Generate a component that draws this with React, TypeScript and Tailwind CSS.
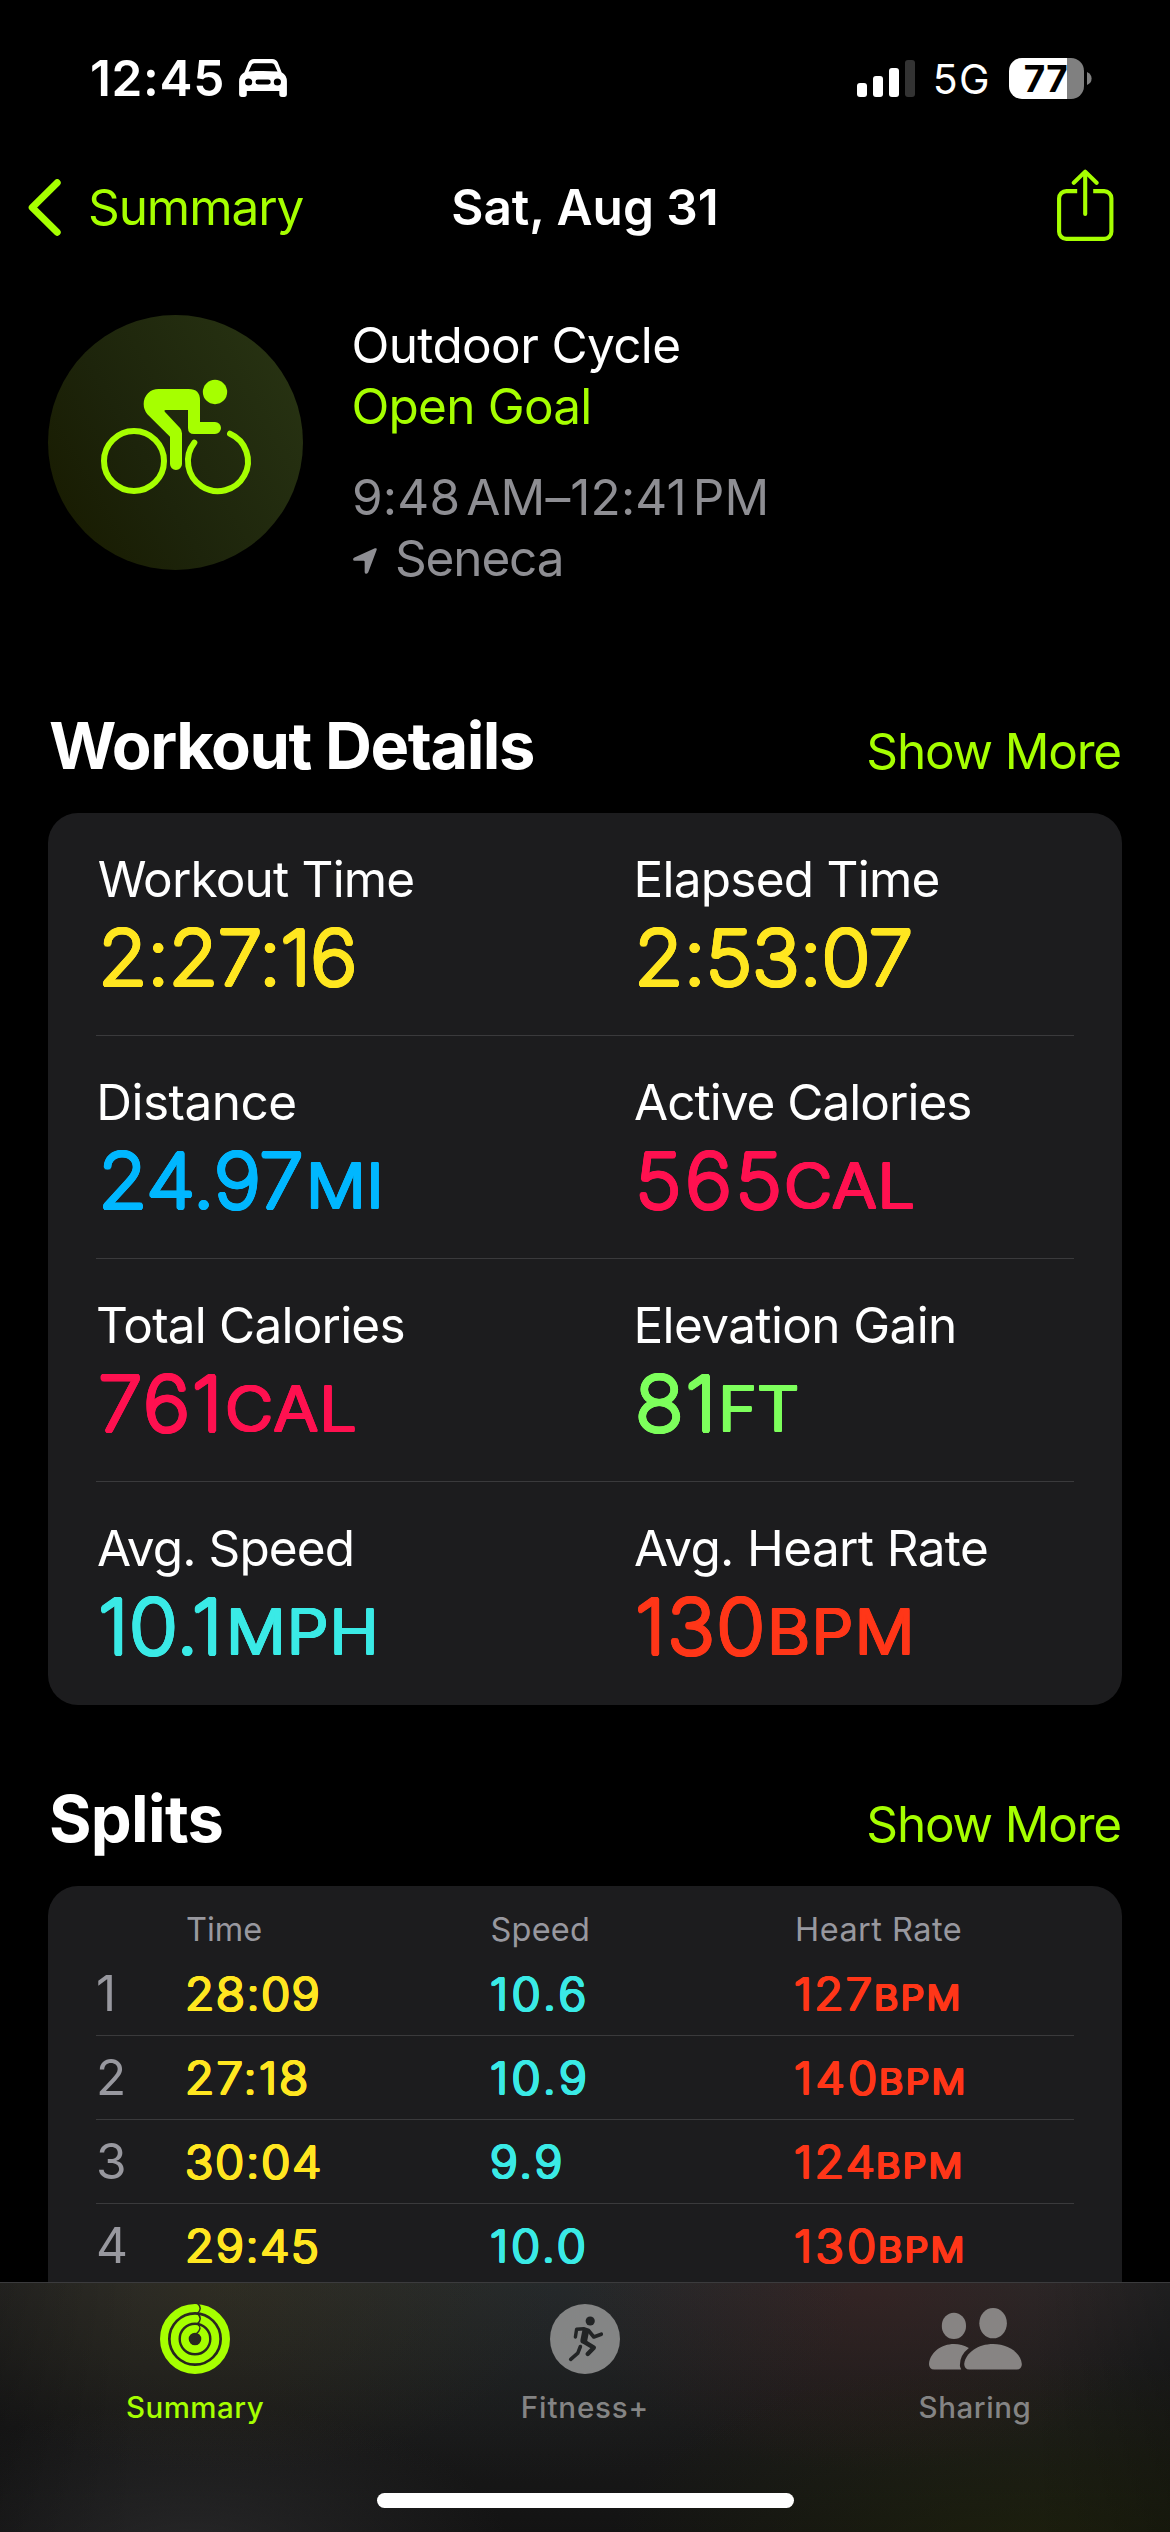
import type { ReactNode } from "react";

type Metric = {
  label: string;
  labelClass: string;
  value: string;
  valueClass: string;
  color: string;
  unit?: string;
  unitClass?: string;
};

const metrics: Metric[] = [
  { label: "Workout Time", labelClass: "tracking-[-0.83px] ml-[1.7px]", color: "text-[#ffe620]", value: "2:27:16", valueClass: "tracking-[-0.65px]" },
  { label: "Elapsed Time", labelClass: "tracking-[-0.75px] ml-[0.5px]", color: "text-[#ffe620]", value: "2:53:07", valueClass: "tracking-[-0.2px] -ml-px" },
  { label: "Distance", labelClass: "tracking-[-0.51px] ml-[0.3px]", color: "text-[#00b7ff]", value: "24.97", valueClass: "tracking-[-0.25px]", unit: "MI", unitClass: "tracking-[0.4px] ml-[15px]" },
  { label: "Active Calories", labelClass: "tracking-[-0.99px] ml-px", color: "text-[#ff1150]", value: "565", valueClass: "tracking-[3.25px]", unit: "CAL", unitClass: "tracking-[0.65px] ml-[8px]" },
  { label: "Total Calories", labelClass: "tracking-[-0.8px]", color: "text-[#ff1150]", value: "761", valueClass: "tracking-[1.65px]", unit: "CAL", unitClass: "tracking-[1.05px] ml-[8.2px]" },
  { label: "Elevation Gain", labelClass: "tracking-[-0.63px] ml-[0.5px]", color: "text-[#7dff5c]", value: "81", valueClass: "tracking-[1.9px]", unit: "FT", unitClass: "ml-[4.9px]" },
  { label: "Avg. Speed", labelClass: "tracking-[-0.92px] ml-px", color: "text-[#3aeae6]", value: "10.1", valueClass: "tracking-[0.4px]", unit: "MPH", unitClass: "tracking-[0.9px] ml-[10.2px]" },
  { label: "Avg. Heart Rate", labelClass: "tracking-[-0.63px] ml-px", color: "text-[#ff3618]", value: "130", valueClass: "tracking-[1.35px]", unit: "BPM", unitClass: "tracking-[1.3px] ml-[8.4px]" },
];

const splits = [
  { n: "1", time: "28:09", timeClass: "tracking-[1.6px]", speed: "10.6", speedClass: "tracking-[3.4px]", hr: "127", hrClass: "tracking-[2px]", unitClass: "ml-[5.1px]" },
  { n: "2", time: "27:18", timeClass: "tracking-[2.1px]", speed: "10.9", speedClass: "tracking-[3.3px]", hr: "140", hrClass: "tracking-[3.3px]", unitClass: "ml-[4.2px]" },
  { n: "3", time: "30:04", timeClass: "tracking-[1.95px]", speed: "9.9", speedClass: "tracking-[2.4px]", hr: "124", hrClass: "tracking-[2.4px]", unitClass: "ml-[4px]" },
  { n: "4", time: "29:45", timeClass: "tracking-[1.6px]", speed: "10.0", speedClass: "tracking-[2.9px]", hr: "130", hrClass: "tracking-[3.2px]", unitClass: "ml-[4.3px]" },
];

/* Light glyphs thickened evenly in every direction, which rounds their stroke ends. */
const roundedValue =
  "inline-block origin-left scale-x-[1.06] font-extralight [text-shadow:2px_0_currentColor,1.732px_1px_currentColor,1px_1.732px_currentColor,0_2px_currentColor,-1px_1.732px_currentColor,-1.732px_1px_currentColor,-2px_0_currentColor,-1.732px_-1px_currentColor,-1px_-1.732px_currentColor,0_-2px_currentColor,1px_-1.732px_currentColor,1.732px_-1px_currentColor]";
const roundedUnit =
  "inline-block origin-left scale-x-[1.08] font-light [text-shadow:1.35px_0_currentColor,1.17px_0.68px_currentColor,0.68px_1.17px_currentColor,0_1.35px_currentColor,-0.68px_1.17px_currentColor,-1.17px_0.68px_currentColor,-1.35px_0_currentColor,-1.17px_-0.68px_currentColor,-0.68px_-1.17px_currentColor,0_-1.35px_currentColor,0.68px_-1.17px_currentColor,1.17px_-0.68px_currentColor]";
const roundedCell =
  "inline-block origin-left scale-x-[1.08] font-extralight [text-shadow:1.4px_0_currentColor,1.2px_0.7px_currentColor,0.7px_1.2px_currentColor,0_1.4px_currentColor,-0.7px_1.2px_currentColor,-1.2px_0.7px_currentColor,-1.4px_0_currentColor,-1.2px_-0.7px_currentColor,-0.7px_-1.2px_currentColor,0_-1.4px_currentColor,0.7px_-1.2px_currentColor,1.2px_-0.7px_currentColor]";
const roundedCellUnit =
  "inline-block origin-left scale-x-[1.1] font-light [text-shadow:1.1px_0_currentColor,0.95px_0.55px_currentColor,0.55px_0.95px_currentColor,0_1.1px_currentColor,-0.55px_0.95px_currentColor,-0.95px_0.55px_currentColor,-1.1px_0_currentColor,-0.95px_-0.55px_currentColor,-0.55px_-0.95px_currentColor,0_-1.1px_currentColor,0.55px_-0.95px_currentColor,0.95px_-0.55px_currentColor]";

function CarIcon() {
  return (
    <svg viewBox="0 0 48 38" className="h-[38px] w-[48px] fill-white">
      <path
        fillRule="evenodd"
        d="M9.4 3.6Q11 0 15 0H33.2Q37.2 0 38.8 3.6L42.6 13.2Q47.9 16 47.9 22.500V35.500A2.400 2.400 0 0 1 45.500 37.900H43A2.700 2.700 0 0 1 40.300 35.200V32H7.800V35.200A2.700 2.700 0 0 1 5.100 37.900H2.500A2.400 2.400 0 0 1 .1 35.500V22.500Q.1 16 5.500 13.200ZM12.900 5.600L9.600 12.400Q24 11.400 38.500 12.400L35.300 5.600Q34.700 4.400 33 4.300H15.200Q13.500 4.400 12.900 5.600ZM9.600 19.400A3.600 3.600 0 1 0 9.600 26.600A3.600 3.600 0 1 0 9.600 19.400ZM38.400 19.400A3.600 3.600 0 1 0 38.400 26.600A3.600 3.600 0 1 0 38.400 19.400ZM18.900 20.600A2.450 2.450 0 0 0 18.900 25.500H29.300A2.450 2.450 0 0 0 29.300 20.600Z"
      />
    </svg>
  );
}

function SignalIcon() {
  return (
    <svg viewBox="0 0 58 37" className="h-[37px] w-[58px] fill-white">
      <rect x="0" y="23" width="10" height="14" rx="3" />
      <rect x="16" y="16" width="10" height="21" rx="3" />
      <rect x="32" y="8" width="10" height="29" rx="3" />
      <rect x="48" y="0" width="10" height="37" rx="3" fill="#333333" />
    </svg>
  );
}

function Battery() {
  return (
    <div className="flex items-center">
      <div className="flex h-[41px] w-[75px] items-center rounded-[13px] bg-[linear-gradient(to_right,#fff_58px,#808080_58px)] pl-[14.7px]">
        <span className="text-[37px] leading-[45px] font-bold tracking-[0.3px] text-black">77</span>
      </div>
      <svg viewBox="0 0 5 13" className="ml-[3px] h-[13px] w-[5px] fill-[#808080]">
        <path d="M0 0Q4.600 2 4.600 6.500T0 13Z" />
      </svg>
    </div>
  );
}

function ShareIcon() {
  return (
    <svg viewBox="0 0 57 72" className="h-[72px] w-[57px] fill-none stroke-[#a6ff00] stroke-[4.100px]">
      <path d="M20.200 22.100H9.300A7.200 7.200 0 0 0 2.100 29.300V62.700A7.200 7.200 0 0 0 9.300 69.900H47.200A7.200 7.200 0 0 0 54.400 62.700V29.300A7.200 7.200 0 0 0 47.200 22.100H36.200" />
      <path strokeLinecap="round" strokeLinejoin="round" d="M28.200 45V2.800M16.800 13.800L28.200 2.600L39.600 13.800" />
    </svg>
  );
}

function CyclistBadge() {
  return (
    <div className="size-[255px] shrink-0 rounded-full bg-[linear-gradient(60deg,#181b00_5%,#1d240b_40%,#273212_90%)]">
      <svg viewBox="144 75 765 765" className="size-full fill-[#a6ff00]">
        <g fill="none" stroke="#a6ff00" strokeWidth="18" strokeLinecap="round">
          <circle cx="402" cy="513" r="90" />
          <path d="M690 431A90 90 0 1 1 583 458" />
        </g>
        <circle cx="645" cy="306" r="36.500" />
        <path d="M476 297H566Q600 297 600 331V396H645A18 18 0 0 1 645 432H582Q564 432 564 414V360H497Q491 360 495 366L540 414Q546 421 546 430V522A18 18 0 0 1 510 522V440L442 373Q431 359 431 342Q431 322 444 309.500T476 297Z" />
      </svg>
    </div>
  );
}

function RingsIcon() {
  return (
    <svg viewBox="0 0 70 70" className="size-[70px] fill-none stroke-[#a6ff00]">
      <circle cx="35" cy="35" r="31" strokeWidth="8" />
      <circle cx="35" cy="35" r="20.400" strokeWidth="7.800" />
      <circle cx="35" cy="35" r="10.200" strokeWidth="7.800" />
      <g stroke="#292820" strokeWidth="1.500">
        <path d="M37.600-.5Q43 4.500 37.300 9.600" />
        <path d="M37.600 9.600Q43 14.500 37.300 20" />
        <path d="M37.600 20Q43 24.500 36 30" />
      </g>
    </svg>
  );
}

function RunnerIcon() {
  return (
    <svg viewBox="0 0 70 70" className="size-[70px]">
      <circle cx="35" cy="35" r="35" fill="#848585" />
      <g fill="none" stroke="#222425" strokeLinecap="round" strokeLinejoin="round">
        <path strokeWidth="3.400" d="M25.400 33L26.600 25.300L34 24.800" />
        <path strokeWidth="3.600" d="M38.500 26.500L43.800 33L51.300 30.200" />
        <path strokeWidth="6.800" d="M35.700 27L33.800 36.500" />
        <path strokeWidth="4.400" d="M34.500 38L43.800 43.700L37.700 50" />
        <path strokeWidth="3.600" d="M30.400 42.500L27.800 49.200L20.700 55.400" />
      </g>
      <circle cx="40.200" cy="17" r="4.600" fill="#222425" />
    </svg>
  );
}

function PeopleIcon() {
  return (
    <svg viewBox="684 144 280 186" className="my-1 h-[62px] w-[93px]">
      <g fill="#878483">
        <ellipse cx="759" cy="197.500" rx="36.500" ry="39.500" />
        <ellipse cx="877" cy="189.500" rx="41.500" ry="45.500" />
        <path d="M700 329Q684 328 684 312C687 277 722 252 759 252Q783 252 804 264Q776 286 777 316Q777 323 781 329Z" />
        <path d="M806 329Q790 328 790 312C794 278 832 252 877 252S960 278 963.500 312Q964 328 948 329Z" />
      </g>
    </svg>
  );
}

function SectionHeading({ title, titleClass }: { title: string; titleClass: string }) {
  return (
    <div className="flex h-[106px] items-baseline justify-between">
      <h2 className={`text-[65px] leading-[78px] font-bold ${titleClass}`}>{title}</h2>
      <button className="mr-px text-[49.5px] leading-[60px] tracking-[-1.18px] text-[#a6ff00]">Show More</button>
    </div>
  );
}

function MetricCell({ m }: { m: Metric }) {
  return (
    <div className="flex flex-col pt-9">
      <span className={`text-[49.5px] leading-[60px] text-white ${m.labelClass}`}>{m.label}</span>
      <div className={`flex items-baseline pl-[1.5px] text-[76px] leading-[96px] ${m.color}`}>
        <span className={`${roundedValue} ${m.valueClass}`}>{m.value}</span>
        {m.unit && <span className={`text-[61.5px] leading-none ${roundedUnit} ${m.unitClass}`}>{m.unit}</span>}
      </div>
    </div>
  );
}

function Tab({ icon, label, className }: { icon: ReactNode; label: string; className: string }) {
  return (
    <button className="flex flex-col items-center">
      {icon}
      <span className={`mt-[15px] text-[29.5px] leading-9 font-medium ${className}`}>{label}</span>
    </button>
  );
}

export default function App() {
  return (
    <div className="flex h-[2532px] w-[1170px] flex-col overflow-hidden bg-black font-['Inter',sans-serif] text-white">
      <header className="flex h-[108px] shrink-0 items-center justify-between pt-12 pr-[78px] pl-[90px]">
        <div className="flex items-center gap-[14px]">
          <span className="text-[49.5px] leading-[60px] font-semibold tracking-[0.67px]">12:45</span>
          <CarIcon />
        </div>
        <div className="flex items-center gap-[18px]">
          <SignalIcon />
          <span className="pt-[2px] text-[41px] leading-[58px] tracking-[1.38px]">5G</span>
          <Battery />
        </div>
      </header>

      <nav className="mt-[61px] grid h-[72px] shrink-0 grid-cols-[1fr_auto_1fr] items-center">
        <button className="flex items-center gap-[27px] pt-1 pl-7 text-[#a6ff00]">
          <svg viewBox="0 0 33 57" className="h-[57px] w-[33px] fill-none stroke-[#a6ff00] stroke-[7px]">
            <path strokeLinecap="round" strokeLinejoin="round" d="M29.200 3.700L4.200 28.500L29.200 53.300" />
          </svg>
          <span className="text-[49.5px] leading-[60px] tracking-[-1.08px]">Summary</span>
        </button>
        <h1 className="pt-1 text-[49.5px] leading-[60px] font-semibold">Sat, Aug 31</h1>
        <button className="flex justify-end pr-14">
          <ShareIcon />
        </button>
      </nav>

      <main className="flex min-h-0 flex-1 flex-col overflow-hidden px-12">
        <section className="mt-[74px] flex h-[274px] shrink-0 gap-12">
          <CyclistBadge />
          <div className="flex flex-col text-[49.5px] leading-[61px]">
            <span className="ml-[0.5px] tracking-[-0.64px]">Outdoor Cycle</span>
            <span className="ml-[0.5px] tracking-[-0.78px] text-[#a6ff00]">Open Goal</span>
            <span className="mt-[30px] ml-px tracking-[0.15px] whitespace-nowrap text-[#8e8e93] [word-spacing:-8px]">9:48 AM–12:41 PM</span>
            <span className="flex items-center gap-[18px] pl-[2px] tracking-[-1.16px] text-[#8e8e93]">
              <svg viewBox="0 0 72 79" className="mt-1 h-[26px] w-6 fill-[#8e8e93]">
                <path d="M66 1Q74-1 71 7L46 74Q43 80 38 78Q35 77 35 73V42Q35 39 32 39H4Q0 39 0 35Q-1 32 4 29Z" />
              </svg>
              Seneca
            </span>
          </div>
        </section>

        <section className="mt-[118px] shrink-0">
          <SectionHeading title="Workout Details" titleClass="tracking-[-1.43px] ml-[1px]" />
          <div className="rounded-[30px] bg-[#1c1c1e] px-12">
            {[0, 2, 4, 6].map((i) => (
              <div key={i} className="grid h-[223px] grid-cols-[537px_1fr] border-b border-[#3a3a3c] last:border-b-0">
                <MetricCell m={metrics[i]} />
                <MetricCell m={metrics[i + 1]} />
              </div>
            ))}
          </div>
        </section>

        <section className="mt-[75px] shrink-0">
          <SectionHeading title="Splits" titleClass="tracking-[-0.72px] ml-px" />
          <div className="rounded-t-[30px] bg-[#1c1c1e] px-12">
            <div className="grid h-[66px] grid-cols-[90px_304.5px_304.5px_1fr] pt-6 text-[32.5px] leading-10 text-[#98989f]">
              <span className="col-start-2">Time</span>
              <span className="tracking-[0.19px]">Speed</span>
              <span className="tracking-[0.48px]">Heart Rate</span>
            </div>
            {splits.map((s) => (
              <div
                key={s.n}
                className="grid h-[84px] grid-cols-[90px_304.5px_304.5px_1fr] items-center border-b border-[#3a3a3c] text-[44px] leading-[60px]"
              >
                <span className="mb-0.5 text-[49.5px] text-[#98989f]">{s.n}</span>
                <div className="-ml-[0.6px] text-[#ffe620]">
                  <span className={`${roundedCell} ${s.timeClass}`}>{s.time}</span>
                </div>
                <div className="-ml-[0.6px] text-[#3aeae6]">
                  <span className={`${roundedCell} ${s.speedClass}`}>{s.speed}</span>
                </div>
                <div className="-ml-[0.6px] flex items-baseline text-[#ff3618]">
                  <span className={`${roundedCell} ${s.hrClass}`}>{s.hr}</span>
                  <span className={`text-[34px] leading-none tracking-[2.2px] ${roundedCellUnit} ${s.unitClass}`}>BPM</span>
                </div>
              </div>
            ))}
          </div>
        </section>
      </main>

      <footer className="flex h-[250px] shrink-0 flex-col items-center border-t border-[#3b3b3d] bg-[radial-gradient(ellipse_330px_190px_at_230px_0px,rgba(64,58,24,0.3),transparent),radial-gradient(ellipse_330px_200px_at_530px_0px,rgba(30,48,54,0.22),transparent),radial-gradient(ellipse_300px_190px_at_870px_0px,rgba(74,32,30,0.36),transparent),radial-gradient(ellipse_420px_190px_at_1030px_260px,rgba(38,44,6,0.45),transparent),radial-gradient(ellipse_320px_150px_at_190px_270px,rgba(52,52,54,0.6),transparent),linear-gradient(to_right,rgba(0,0,0,0.22),transparent_12%_88%,rgba(0,0,0,0.22)),linear-gradient(to_bottom,#272728,#1b1b1b_50%,#131313)]">
        <div className="grid w-full grid-cols-3 pt-[21px]">
          <Tab icon={<RingsIcon />} label="Summary" className="tracking-[0.48px] text-[#a6ff00]" />
          <Tab icon={<RunnerIcon />} label="Fitness+" className="tracking-[0.86px] text-[#848484]" />
          <Tab icon={<PeopleIcon />} label="Sharing" className="tracking-[0.58px] text-[#848484]" />
        </div>
        <div className="mt-[68px] h-[15px] w-[417px] rounded-full bg-white" />
      </footer>
    </div>
  );
}
